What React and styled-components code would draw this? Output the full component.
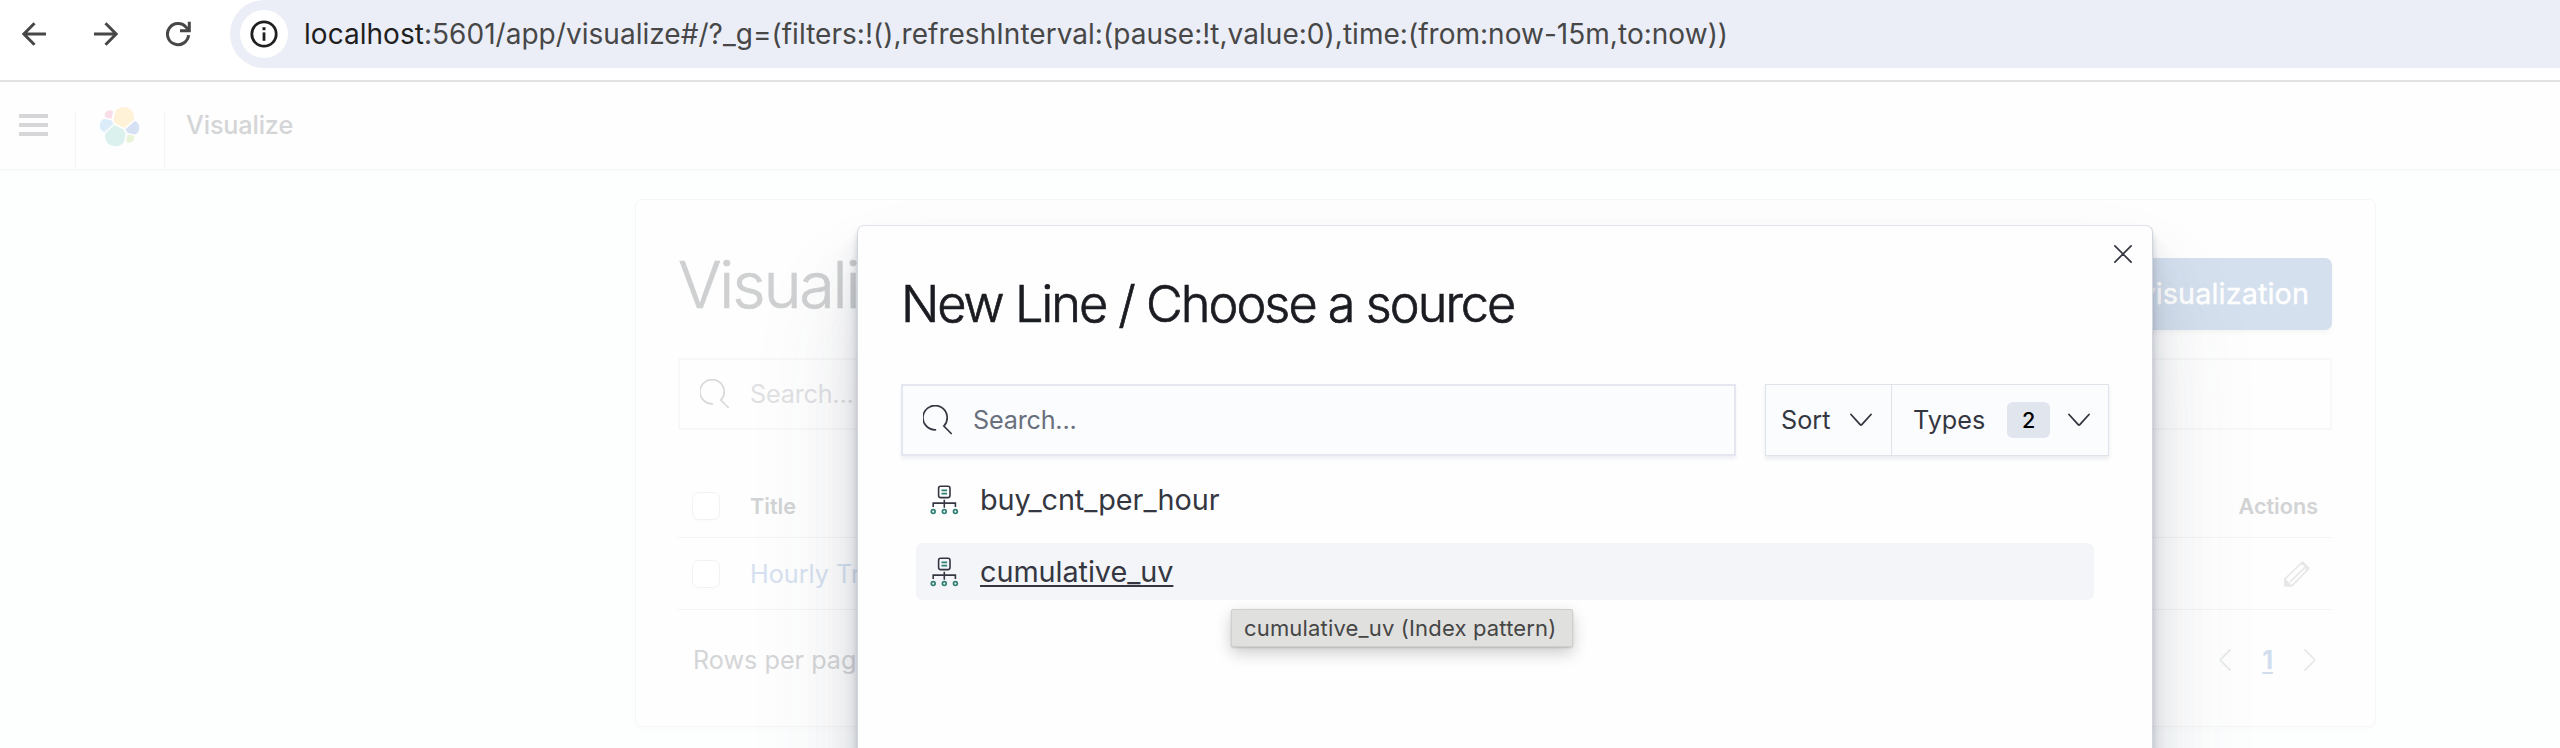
import React from 'react';
import styled, { createGlobalStyle } from 'styled-components';

const GlobalStyle = createGlobalStyle`
  *, *::before, *::after { box-sizing: border-box; }
  body { margin: 0; font-family: Inter, "Liberation Sans", sans-serif; }
  svg { display: block; flex: none; }
`;

const Window = styled.div`
  position: relative;
  display: flex;
  flex-direction: column;
  width: 2560px;
  height: 748px;
  overflow: hidden;
  background: #fdfefe;
`;

/* Browser chrome */
const BrowserBar = styled.div`
  display: flex;
  align-items: flex-start;
  height: 82px;
  flex: none;
  border-bottom: 2px solid #e1e1e1;
  background: #fff;
`;
const NavButtons = styled.div`
  display: flex;
  align-items: center;
  gap: 48px;
  height: 68px;
  width: 230px;
  padding-left: 22px;
`;
const Omnibox = styled.div`
  flex: 1;
  display: flex;
  align-items: center;
  height: 68px;
  padding-left: 10px;
  border-radius: 34px 0 0 34px;
  background: #ebeef7;
`;
const SiteInfo = styled.span`
  display: flex;
  align-items: center;
  justify-content: center;
  width: 48px;
  height: 48px;
  border-radius: 50%;
  background: #fff;
`;
const Url = styled.span`
  margin-left: 16px;
  font-size: 28px;
  letter-spacing: 0.03px;
  color: #474747;
  white-space: nowrap;
`;
const Host = styled.span`
  color: #1f1f1f;
`;

/* Application header */
const AppHeader = styled.header`
  display: flex;
  align-items: flex-end;
  flex: none;
  height: 87px;
  background: #fefefe;
  box-shadow: 0 1px 0 #f6f6f7, 0 3px 5px rgba(0, 0, 0, 0.012);
`;
const HeaderCell = styled.div`
  display: flex;
  align-items: flex-start;
  height: 58px;
  width: ${(p) => p.$width}px;
  padding-left: ${(p) => p.$pad}px;
  border-right: ${(p) => (p.$last ? 'none' : '1px solid #f4f4f5')};
`;
const MenuLines = styled.div`
  display: flex;
  flex-direction: column;
  gap: 5px;
  padding-top: 3px;
  span { width: 29px; height: 4px; background: #d6d6d8; }
`;
const LogoSlot = styled.div`
  margin-top: -6px;
`;
const Crumb = styled.span`
  margin-top: -1px;
  font-size: 25.2px;
  font-weight: 500;
  line-height: 30px;
  letter-spacing: -0.15px;
  color: #d4d5d7;
`;

/* Visualize listing */
const Panel = styled.section`
  width: 1741px;
  height: 528px;
  flex: none;
  margin: 30px 0 0 635px;
  padding: 58px 43px 0 42px;
  border: 1px solid #f5f6f7;
  border-radius: 7px;
  background: #fefefe;
  box-shadow: 0 3px 4px rgba(0, 0, 0, 0.012);
`;
const PanelHead = styled.div`
  display: flex;
  align-items: flex-start;
  justify-content: space-between;
`;
const PageTitle = styled.h1`
  margin: 0;
  font-size: 64.8px;
  font-weight: 300;
  line-height: 54px;
  letter-spacing: -0.035em;
  -webkit-text-stroke: 0.7px #cfd0d1;
  color: #cfd0d1;
`;
const CreateButton = styled.button`
  height: 72px;
  padding: 0 23px 2px;
  border: 0;
  border-radius: 7px;
  background: #d5e0ee;
  box-shadow: 0 3px 4px rgba(0, 0, 0, 0.03);
  color: #fff;
  font: 400 28.8px Inter, sans-serif;
  letter-spacing: 0.1px;
  -webkit-text-stroke: 0.4px #fff;
`;
const SearchField = styled.div`
  display: flex;
  align-items: center;
  gap: 20px;
  height: 72px;
  font-size: 25.2px;
  letter-spacing: -0.008em;
`;
const PageSearch = styled(SearchField)`
  margin-top: 28px;
  padding-left: 20px;
  border: 2px solid #f8f8f9;
  box-shadow: 0 2px 3px rgba(0, 0, 0, 0.008);
  color: #e0e1e3;
`;
const TableRow = styled.div`
  display: flex;
  align-items: center;
  height: ${(p) => p.$height}px;
  margin-top: ${(p) => p.$top || 0}px;
  padding: 0 ${(p) => p.$right}px 0 14px;
  border-bottom: 1px solid #f3f4f5;
`;
const Checkbox = styled.span`
  width: 28px;
  height: 28px;
  margin-right: 30px;
  border: 1px solid #f1f2f4;
  border-radius: 7px;
  background: #fff;
  box-shadow: 0 2px 2px rgba(0, 0, 0, 0.01);
`;
const ColumnName = styled.span`
  flex: ${(p) => (p.$grow ? 1 : 'none')};
  font-size: 21.6px;
  font-weight: 600;
  color: #d2d3d4;
`;
const ItemLink = styled.span`
  flex: 1;
  font-size: 25.2px;
  color: #d5e1f0;
`;
const Footer = styled.div`
  display: flex;
  align-items: center;
  justify-content: space-between;
  height: 100px;
  padding: 0 16px 0 15px;
  font-size: 25.2px;
  color: #d4d5d7;
`;
const Pager = styled.div`
  display: flex;
  align-items: center;
  gap: 31px;
`;
const CurrentPage = styled.span`
  font-weight: 700;
  color: #d2deee;
  text-decoration: underline;
  text-decoration-thickness: 2px;
  text-underline-offset: 3px;
`;

/* Source selection dialog */
const Dialog = styled.div`
  position: absolute;
  left: 857px;
  top: 225px;
  width: 1296px;
  height: 760px;
  padding: 42px 43px 0;
  border: 1px solid #d0d5de;
  border-top-color: #e0e3e9;
  border-radius: 7px;
  background: #fefefe;
  box-shadow:
    0 72px 115px rgba(65, 78, 101, 0.1),
    0 43px 58px rgba(65, 78, 101, 0.1),
    0 29px 29px rgba(65, 78, 101, 0.1),
    0 14px 14px rgba(65, 78, 101, 0.1),
    0 7px 7px rgba(65, 78, 101, 0.1),
    0 4px 4px rgba(65, 78, 101, 0.1);
`;
const CloseButton = styled.span`
  position: absolute;
  right: 20px;
  top: 19px;
`;
const DialogTitle = styled.h2`
  margin: 0 0 44px;
  font-size: 50.4px;
  font-weight: 300;
  line-height: 72px;
  letter-spacing: -0.039em;
  -webkit-text-stroke: 0.7px #1a1c21;
  color: #1a1c21;
`;
const Controls = styled.div`
  display: flex;
  justify-content: space-between;
`;
const DialogSearch = styled(SearchField)`
  width: 835px;
  padding-left: 20px;
  border: 2px solid #e4e7ef;
  background: #fbfcfe;
  box-shadow: 0 3px 3px rgba(152, 162, 179, 0.15);
  color: #69707d;
`;
const FilterGroup = styled.div`
  display: flex;
  width: 344px;
  height: 72px;
  border: 1px solid #e0e4ea;
  background: #fbfcfe;
  box-shadow: 0 3px 4px rgba(152, 162, 179, 0.2);
`;
const Filter = styled.div`
  display: flex;
  align-items: center;
  width: ${(p) => p.$width}px;
  padding-left: ${(p) => p.$pad}px;
  gap: 20px;
  border-right: ${(p) => (p.$divided ? '1px solid #e0e4ea' : 'none')};
  font-size: 25.2px;
  color: #343741;
`;
const Badge = styled.span`
  display: flex;
  align-items: center;
  justify-content: center;
  width: 43px;
  height: 36px;
  margin: 0 -2px 0 2px;
  border-radius: 6px;
  background: #e0e5ee;
  color: #000;
  font-size: 21.6px;
  font-weight: 500;
`;
const SourceList = styled.div`
  display: flex;
  flex-direction: column;
  gap: 15px;
  padding: 15px 15px 0;
`;
const Source = styled.div`
  display: flex;
  align-items: center;
  gap: 20px;
  height: 57px;
  padding-left: 14px;
  border-radius: 7px;
  background: ${(p) => (p.$active ? '#f4f5f8' : 'transparent')};
  color: #343741;
  font-size: 28.8px;
  letter-spacing: -0.05px;
  text-decoration: ${(p) => (p.$active ? 'underline' : 'none')};
  text-decoration-thickness: 2px;
  text-underline-offset: 3px;
  text-decoration-skip-ink: none;
`;
const Tooltip = styled.div`
  position: absolute;
  left: 1231px;
  top: 609px;
  width: 342px;
  height: 38px;
  padding-left: 12px;
  border: 1px solid #cfcfcd;
  border-radius: 2px;
  background: #e0e0de;
  box-shadow: 0 6px 16px rgba(0, 0, 0, 0.2), 0 1px 2px rgba(0, 0, 0, 0.15);
  color: #464646;
  font-size: 22px;
  letter-spacing: 0.17px;
  line-height: 36px;
  white-space: nowrap;
`;

const Arrow = ({ flip }) => (
  <svg width="24" height="24" viewBox="0 0 24 24" fill="none" stroke="#474747" strokeWidth="3">
    <path d={flip ? 'M0 12h22M11.5 1.2 22.2 12 11.5 22.8' : 'M24 12H2M12.5 1.2 1.8 12l10.7 10.8'} />
  </svg>
);
const Reload = () => (
  <svg width="26" height="26" viewBox="0 0 26 26" fill="none" stroke="#474747" strokeWidth="3">
    <path d="M22.6 14.2a10.6 10.6 0 1 1-2.3-7.8l2.5 3" />
    <path d="M14 9.8h9.3V.8" />
  </svg>
);
const Info = () => (
  <svg width="28" height="28" viewBox="0 0 28 28" fill="none" stroke="#1f1f1f">
    <circle cx="14" cy="14" r="12.2" strokeWidth="2.8" />
    <path d="M14 12.4v8.4" strokeWidth="2.8" />
    <path d="M14 7.2v3" strokeWidth="3" />
  </svg>
);
const ElasticLogo = () => (
  <svg width="43.2" height="43.2" viewBox="0 0 32 32">
    <path fill="#fff2d6" d="M12.58 13.787l7.002 3.211 7.066-6.213a7.85 7.85 0 0 0 .152-1.557c0-4.287-3.466-7.774-7.728-7.774a7.7 7.7 0 0 0-6.372 3.382l-1.176 6.118z" />
    <path fill="#daf1ee" d="M5.333 21.228a7.96 7.96 0 0 0-.153 1.572c0 4.3 3.478 7.8 7.754 7.8 2.567 0 4.973-1.277 6.415-3.414l1.167-6.1-1.558-2.991-7.03-3.215z" />
    <path fill="#f8dde9" d="M5.288 9.067l4.799 1.137L11.14 4.73a3.785 3.785 0 0 0-6.09 3.01 3.82 3.82 0 0 0 .238 1.327z" />
    <path fill="#dbecfb" d="M4.872 10.214a5.294 5.294 0 0 0-3.504 5.01 5.315 5.315 0 0 0 3.386 4.964l6.733-6.119-1.236-2.653z" />
    <path fill="#e9f3d7" d="M20.873 27.186a3.778 3.778 0 0 0 6.07-3 3.83 3.83 0 0 0-.236-1.324l-4.796-1.128z" />
    <path fill="#d6e1f3" d="M21.848 20.563l5.28 1.238a5.34 5.34 0 0 0 3.503-5.013 5.307 5.307 0 0 0-3.377-4.957l-6.904 6.075z" />
  </svg>
);
const Magnifier = ({ color }) => (
  <svg width="30" height="30" viewBox="0 0 30 30" fill="none" stroke={color} strokeWidth="1.7" strokeLinecap="round">
    <path d="M12.5 24.8A12.1 12.1 0 1 1 20.8 21.1L28.2 28.5" />
  </svg>
);
const Chevron = () => (
  <svg width="22" height="14" viewBox="0 0 22 14" fill="none" stroke="#343741" strokeWidth="1.8" strokeLinecap="round" strokeLinejoin="round">
    <path d="M1 1.5 10.2 11.6q.8.8 1.6 0L21 1.5" />
  </svg>
);
const PageArrow = ({ next }) => (
  <svg width="12" height="22" viewBox="0 0 12 22" fill="none" stroke="#e8e9ea" strokeWidth="1.8" strokeLinecap="round">
    <path d={next ? 'M1 1l9.4 9.3q.7.7 0 1.4L1 21' : 'M11 1 1.6 10.3q-.7.7 0 1.4L11 21'} />
  </svg>
);
const Cross = () => (
  <svg width="18" height="18" viewBox="0 0 18 18" fill="none" stroke="#343741" strokeWidth="1.7" strokeLinecap="round">
    <path d="M.9.9l16.2 16.2M17.1.9.9 17.1" />
  </svg>
);
const Pencil = () => (
  <svg width="26" height="26" viewBox="0 0 26 26" fill="none" stroke="#e6e7e8" strokeWidth="1.7" strokeLinejoin="round">
    <path d="M1 17.9 17.9 1.5q.6-.6 1.2 0l5.3 5.3q.6.6 0 1.2L8.2 24.6H1zM16.6 2.8l6.1 1.9-.4 5.1M22.7 4.7 6 20.8" />
    <path d="M1 18.6v6h6z" fill="#e6e7e8" />
  </svg>
);
const IndexPattern = () => (
  <svg width="30" height="30" viewBox="0 0 30 30" fill="none" stroke="#343741" strokeWidth="1.6">
    <rect x="8.6" y="1.2" width="11.4" height="11.4" rx="2" />
    <path d="M14.3 14.8v8M3.2 22V18.1h22.2V22" />
    <g stroke="#2f7f73" strokeWidth="1.7">
      <path d="M11.5 5.3h5.6M11.5 8.7h5.6" />
      <circle cx="3.2" cy="26.6" r="1.9" />
      <circle cx="14.3" cy="26.6" r="1.9" />
      <circle cx="25.4" cy="26.6" r="1.9" />
    </g>
  </svg>
);

export default function App() {
  return (
    <Window>
      <GlobalStyle />
      <BrowserBar>
        <NavButtons>
          <Arrow />
          <Arrow flip />
          <Reload />
        </NavButtons>
        <Omnibox>
          <SiteInfo><Info /></SiteInfo>
          <Url>
            <Host>localhost</Host>:5601/app/visualize#/?_g=(filters:!(),refreshInterval:(pause:!t,value:0),time:(from:now-15m,to:now))
          </Url>
        </Omnibox>
      </BrowserBar>

      <AppHeader>
        <HeaderCell $width={76} $pad={19}>
          <MenuLines><span /><span /><span /></MenuLines>
        </HeaderCell>
        <HeaderCell $width={89} $pad={22}>
          <LogoSlot><ElasticLogo /></LogoSlot>
        </HeaderCell>
        <HeaderCell $width={400} $pad={21} $last>
          <Crumb>Visualize</Crumb>
        </HeaderCell>
      </AppHeader>

      <Panel>
        <PanelHead>
          <PageTitle>Visualize</PageTitle>
          <CreateButton>Create visualization</CreateButton>
        </PanelHead>
        <PageSearch><Magnifier color="#d8d9db" />Search...</PageSearch>
        <TableRow $height={64} $top={44} $right={14}>
          <Checkbox />
          <ColumnName $grow>Title</ColumnName>
          <ColumnName>Actions</ColumnName>
        </TableRow>
        <TableRow $height={72} $right={22}>
          <Checkbox />
          <ItemLink>Hourly Trading</ItemLink>
          <Pencil />
        </TableRow>
        <Footer>
          <span>Rows per page: 20</span>
          <Pager>
            <PageArrow />
            <CurrentPage>1</CurrentPage>
            <PageArrow next />
          </Pager>
        </Footer>
      </Panel>

      <Dialog>
        <CloseButton><Cross /></CloseButton>
        <DialogTitle>New Line / Choose a source</DialogTitle>
        <Controls>
          <DialogSearch><Magnifier color="#343741" />Search...</DialogSearch>
          <FilterGroup>
            <Filter $width={126} $pad={15} $divided>Sort<Chevron /></Filter>
            <Filter $width={216} $pad={21}>Types<Badge>2</Badge><Chevron /></Filter>
          </FilterGroup>
        </Controls>
        <SourceList>
          <Source><IndexPattern /><span>buy_cnt_per_hour</span></Source>
          <Source $active><IndexPattern /><span>cumulative_uv</span></Source>
        </SourceList>
      </Dialog>

      <Tooltip>cumulative_uv (Index pattern)</Tooltip>
    </Window>
  );
}
